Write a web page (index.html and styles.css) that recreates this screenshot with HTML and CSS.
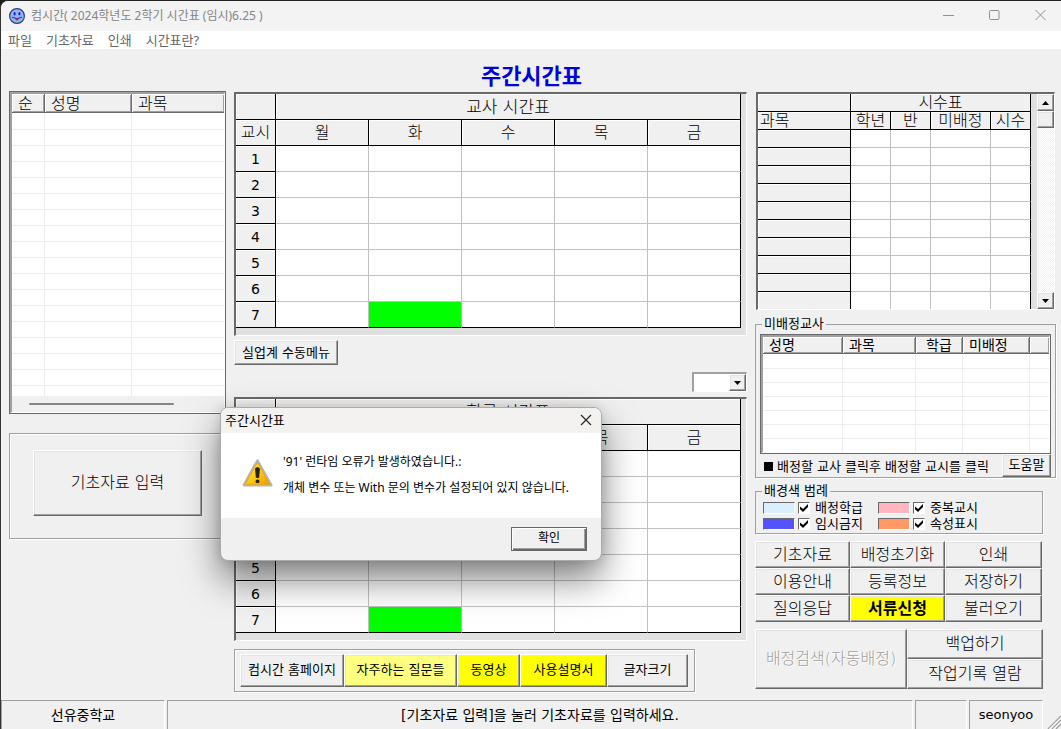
FILE: index.html
```html
<!DOCTYPE html>
<html lang="ko">
<head>
<meta charset="utf-8">
<title>컴시간</title>
<link rel="stylesheet" href="styles.css">
</head>
<body>
<div class="window">
  <header class="titlebar">
    <svg class="app-icon" viewBox="0 0 16 16" aria-hidden="true">
      <circle cx="8" cy="8" r="7.4" fill="#8fb4f8" stroke="#2b3f78" stroke-width="1.2"/>
      <ellipse cx="5.6" cy="5.8" rx="1.1" ry="1.8" fill="#2020c8"/>
      <ellipse cx="10.4" cy="5.8" rx="1.1" ry="1.8" fill="#2020c8"/>
      <path d="M3 9.2Q8 12 13 9.2" fill="none" stroke="#2b2b90"/>
      <path d="M5.6 10.6Q8 14.6 10.4 10.6Z" fill="#d02030"/>
    </svg>
    <span class="titlebar-text">컴시간( 2024학년도 2학기 시간표 (임시)6.25 )</span>
    <div class="window-controls">
      <button type="button" aria-label="최소화"><svg viewBox="0 0 12 12"><path d="M0 5.5H11"/></svg></button>
      <button type="button" aria-label="최대화"><svg viewBox="0 0 12 12"><rect x=".5" y=".5" width="9.5" height="9" rx="1"/></svg></button>
      <button type="button" aria-label="닫기"><svg viewBox="0 0 12 12"><path d="M.5 0L10.5 10M10.5 0L.5 10"/></svg></button>
    </div>
  </header>
  <nav class="menubar">
    <button type="button">파일</button>
    <button type="button">기초자료</button>
    <button type="button">인쇄</button>
    <button type="button">시간표란?</button>
  </nav>

  <main class="workspace">
    <section class="col-left">
      <div class="listview">
        <div class="listview-inner">
          <table class="list teachers">
            <colgroup><col class="w-no"><col class="w-name"><col></colgroup>
            <thead><tr><th>순</th><th>성명</th><th>과목</th></tr></thead>
            <tbody>
              <tr><td></td><td></td><td></td></tr><tr><td></td><td></td><td></td></tr>
              <tr><td></td><td></td><td></td></tr><tr><td></td><td></td><td></td></tr>
              <tr><td></td><td></td><td></td></tr><tr><td></td><td></td><td></td></tr>
              <tr><td></td><td></td><td></td></tr><tr><td></td><td></td><td></td></tr>
              <tr><td></td><td></td><td></td></tr><tr><td></td><td></td><td></td></tr>
              <tr><td></td><td></td><td></td></tr><tr><td></td><td></td><td></td></tr>
              <tr><td></td><td></td><td></td></tr><tr><td></td><td></td><td></td></tr>
              <tr><td></td><td></td><td></td></tr><tr><td></td><td></td><td></td></tr>
              <tr><td></td><td></td><td></td></tr><tr class="cut"><td></td><td></td><td></td></tr>
            </tbody>
          </table>
          <div class="hscroll"><div class="hscroll-thumb"></div></div>
        </div>
      </div>
      <div class="panel input-panel">
        <button type="button" class="btn big">기초자료 입력</button>
      </div>
    </section>

    <section class="col-mid">
      <h1>주간시간표</h1>
      <div class="sheet">
        <table class="grid week">
          <colgroup><col class="w-period"><col><col><col><col><col></colgroup>
          <thead>
            <tr><th></th><th colspan="5" class="caption">교사 시간표</th></tr>
            <tr><th>교시</th><th>월</th><th>화</th><th>수</th><th>목</th><th>금</th></tr>
          </thead>
          <tbody>
            <tr><th>1</th><td></td><td></td><td></td><td></td><td></td></tr>
            <tr><th>2</th><td></td><td></td><td></td><td></td><td></td></tr>
            <tr><th>3</th><td></td><td></td><td></td><td></td><td></td></tr>
            <tr><th>4</th><td></td><td></td><td></td><td></td><td></td></tr>
            <tr><th>5</th><td></td><td></td><td></td><td></td><td></td></tr>
            <tr><th>6</th><td></td><td></td><td></td><td></td><td></td></tr>
            <tr><th>7</th><td></td><td class="marked"></td><td></td><td></td><td></td></tr>
          </tbody>
        </table>
      </div>
      <button type="button" class="btn manual">실업계 수동메뉴</button>
      <div class="combo">
        <select aria-label="학급 선택"><option></option></select>
        <span class="btn arrow" aria-hidden="true"><svg viewBox="0 0 7 4"><path d="M0 0H7L3.5 4Z"/></svg></span>
      </div>
      <div class="sheet">
        <table class="grid week">
          <colgroup><col class="w-period"><col><col><col><col><col></colgroup>
          <thead>
            <tr><th></th><th colspan="5" class="caption">학급 시간표</th></tr>
            <tr><th>교시</th><th>월</th><th>화</th><th>수</th><th>목</th><th>금</th></tr>
          </thead>
          <tbody>
            <tr><th>1</th><td></td><td></td><td></td><td></td><td></td></tr>
            <tr><th>2</th><td></td><td></td><td></td><td></td><td></td></tr>
            <tr><th>3</th><td></td><td></td><td></td><td></td><td></td></tr>
            <tr><th>4</th><td></td><td></td><td></td><td></td><td></td></tr>
            <tr><th>5</th><td></td><td></td><td></td><td></td><td></td></tr>
            <tr><th>6</th><td></td><td></td><td></td><td></td><td></td></tr>
            <tr><th>7</th><td></td><td class="marked"></td><td></td><td></td><td></td></tr>
          </tbody>
        </table>
      </div>
      <div class="panel toolbar">
        <button type="button" class="btn t-home">컴시간 홈페이지</button>
        <button type="button" class="btn pale t-faq">자주하는 질문들</button>
        <button type="button" class="btn yellow t-video">동영상</button>
        <button type="button" class="btn yellow t-manual">사용설명서</button>
        <button type="button" class="btn t-font">글자크기</button>
      </div>
    </section>

    <section class="col-right">
      <div class="sheet hours">
        <table class="grid subjects">
          <colgroup><col><col class="w-s"><col class="w-s"><col class="w-m"><col class="w-s"></colgroup>
          <thead>
            <tr><th></th><th colspan="4">시수표</th></tr>
            <tr><th class="start">과목</th><th>학년</th><th>반</th><th>미배정</th><th>시수</th></tr>
          </thead>
          <tbody>
            <tr><th></th><td></td><td></td><td></td><td></td></tr>
            <tr><th></th><td></td><td></td><td></td><td></td></tr>
            <tr><th></th><td></td><td></td><td></td><td></td></tr>
            <tr><th></th><td></td><td></td><td></td><td></td></tr>
            <tr><th></th><td></td><td></td><td></td><td></td></tr>
            <tr><th></th><td></td><td></td><td></td><td></td></tr>
            <tr><th></th><td></td><td></td><td></td><td></td></tr>
            <tr><th></th><td></td><td></td><td></td><td></td></tr>
            <tr><th></th><td></td><td></td><td></td><td></td></tr>
            <tr class="cut"><th></th><td></td><td></td><td></td><td></td></tr>
          </tbody>
        </table>
        <div class="vscroll">
          <button type="button" class="btn arrow" aria-label="위로"><svg viewBox="0 0 7 4"><path d="M0 4H7L3.5 0Z"/></svg></button>
          <div class="btn vthumb"></div>
          <button type="button" class="btn arrow last" aria-label="아래로"><svg viewBox="0 0 7 4"><path d="M0 0H7L3.5 4Z"/></svg></button>
        </div>
      </div>

      <fieldset class="group unassigned">
        <legend>미배정교사</legend>
        <div class="listview">
          <div class="listview-inner">
            <table class="list small">
              <colgroup><col class="w-a"><col class="w-b"><col class="w-c"><col class="w-d"><col></colgroup>
              <thead><tr><th>성명</th><th>과목</th><th class="mid">학급</th><th>미배정</th><th></th></tr></thead>
              <tbody>
                <tr><td></td><td></td><td></td><td></td><td></td></tr>
                <tr><td></td><td></td><td></td><td></td><td></td></tr>
                <tr><td></td><td></td><td></td><td></td><td></td></tr>
                <tr><td></td><td></td><td></td><td></td><td></td></tr>
                <tr><td></td><td></td><td></td><td></td><td></td></tr>
                <tr><td></td><td></td><td></td><td></td><td></td></tr>
                <tr class="cut"><td></td><td></td><td></td><td></td><td></td></tr>
              </tbody>
            </table>
          </div>
        </div>
        <div class="hint">
          <p><i class="square"></i>배정할 교사 클릭후 배정할 교시를 클릭</p>
          <button type="button" class="btn help">도움말</button>
        </div>
      </fieldset>

      <fieldset class="group legend-group">
        <legend>배경색 범례</legend>
        <div class="keys">
          <label><i class="swatch sky"></i><input type="checkbox" checked>배정학급</label>
          <label><i class="swatch pink"></i><input type="checkbox" checked>중복교시</label>
          <label><i class="swatch blue"></i><input type="checkbox" checked>임시금지</label>
          <label><i class="swatch orange"></i><input type="checkbox" checked>속성표시</label>
        </div>
      </fieldset>

      <div class="actions">
        <button type="button" class="btn">기초자료</button>
        <button type="button" class="btn">배정초기화</button>
        <button type="button" class="btn">인쇄</button>
        <button type="button" class="btn">이용안내</button>
        <button type="button" class="btn">등록정보</button>
        <button type="button" class="btn">저장하기</button>
        <button type="button" class="btn">질의응답</button>
        <button type="button" class="btn yellow strong">서류신청</button>
        <button type="button" class="btn">불러오기</button>
      </div>
      <div class="jobs">
        <button type="button" class="btn search" disabled>배정검색(자동배정)</button>
        <button type="button" class="btn">백업하기</button>
        <button type="button" class="btn">작업기록 열람</button>
      </div>
    </section>
  </main>

  <footer class="statusbar">
    <div class="s-school">선유중학교</div>
    <div class="s-message">[기초자료 입력]을 눌러 기초자료를 입력하세요.</div>
    <div class="s-blank"></div>
    <div class="s-user">seonyoo</div>
    <svg class="grip" viewBox="0 0 14 14" aria-hidden="true"><path d="M1 14L14 1M5 14L14 5M9 14L14 9" stroke="#a0a0a0" stroke-width="1.4"/><path d="M2.5 14L14 2.5M6.5 14L14 6.5" stroke="#fff"/></svg>
  </footer>

  <div class="dialog" role="alertdialog" aria-labelledby="dlg-title" aria-describedby="dlg-text">
    <div class="dialog-title">
      <span id="dlg-title">주간시간표</span>
      <button type="button" class="dialog-close" aria-label="닫기"><svg viewBox="0 0 12 12"><path d="M1 1L11 11M11 1L1 11"/></svg></button>
    </div>
    <div class="dialog-body">
      <svg class="warning" viewBox="0 0 32 30" aria-hidden="true">
        <defs><linearGradient id="amber" x1="0" y1="0" x2="1" y2="1"><stop offset="0" stop-color="#fff13a"/><stop offset=".5" stop-color="#fccb12"/><stop offset="1" stop-color="#ee9a00"/></linearGradient></defs>
        <path d="M16 2.5L30 27.5H2Z" fill="#b4b4b4" stroke="#b4b4b4" stroke-width="3" stroke-linejoin="round"/>
        <path d="M16 4L28.6 26.6H3.4Z" fill="url(#amber)" stroke="#e8a800" stroke-linejoin="round"/>
        <path d="M14 10.4Q16 8.4 18 10.4L17.2 19.6H14.8Z" fill="#222" stroke="#222" stroke-linejoin="round"/>
        <circle cx="16" cy="23.6" r="2" fill="#222"/>
      </svg>
      <div id="dlg-text">
        <p>'91' 런타임 오류가 발생하였습니다.:</p>
        <p>개체 변수 또는 With 문의 변수가 설정되어 있지 않습니다.</p>
      </div>
    </div>
    <div class="dialog-footer">
      <button type="button" class="btn ok">확인</button>
    </div>
  </div>
</div>
</body>
</html>
```

FILE: styles.css
```css
* { box-sizing: border-box; }

:root {
  --face: #f0f0f0;
  --shade: #a0a0a0;
  --dark: #696969;
  --light: #e3e3e3;
  --ui: "Noto Sans", "Noto Sans CJK KR", sans-serif;
  --form: "DejaVu Sans", "Noto Sans CJK KR", sans-serif;
}

body {
  margin: 0;
  background: #1c1c1c;
  color: #000;
  font: 13px/16px var(--form);
}

button, select, input { font: inherit; color: inherit; margin: 0; padding: 0; }
button { border: 0; background: none; white-space: nowrap; }
p, h1 { margin: 0; }
svg { display: block; }

.window {
  position: relative;
  display: flex;
  flex-direction: column;
  min-height: 100vh;
  border-top: 1px solid #222;
  border-left: 1px solid #333;
  border-radius: 8px 0 0 0;
  background: var(--face);
  overflow: hidden;
}

/* title bar and menus */
.titlebar {
  display: flex;
  align-items: center;
  gap: 6px;
  height: 30px;
  padding-left: 8px;
  background: #f3f3f3;
  font: 12px/16px var(--ui);
  color: #858585;
}
.app-icon { width: 16px; height: 16px; }
.window-controls { display: flex; margin-left: auto; }
.window-controls button {
  display: flex;
  justify-content: center;
  align-items: center;
  width: 46px;
  height: 30px;
  padding-left: 6px;
}
.window-controls svg { width: 12px; height: 12px; fill: none; stroke: #909090; }
.menubar {
  display: flex;
  gap: 14px;
  height: 18px;
  padding-left: 7px;
  background: #fff;
  font: 13px/18px var(--ui);
  color: #666;
}

/* shared raised controls */
.btn {
  border: 1px solid;
  border-color: #fff var(--dark) var(--dark) #fff;
  background: var(--face);
  box-shadow: inset -1px -1px var(--shade), inset 1px 1px var(--light);
}
.btn:disabled { color: var(--shade); text-shadow: 1px 1px #fff; }
.btn.pale { background: #ffff80; }
.btn.yellow { background: #ff0; }
.btn.arrow { display: flex; justify-content: center; align-items: center; width: 17px; height: 17px; flex: none; }
.arrow svg { width: 7px; height: 4px; }
.panel {
  border: 1px solid var(--shade);
  box-shadow: inset 1px 1px #fff, 1px 1px #fff;
}

.workspace {
  flex: 1;
  display: grid;
  grid-template-columns: 217fr 513fr 301fr;
  gap: 8px;
  padding: 0 5px 8px 8px;
}
.col-left, .col-mid, .col-right { display: flex; flex-direction: column; min-width: 0; }
.col-left { padding-top: 42px; gap: 19px; }
.col-right { padding-top: 43px; }

/* list views */
.listview { border: 1px solid var(--dark); }
.listview-inner {
  border: 1px solid;
  border-color: var(--shade) #fff #fff var(--shade);
  border-width: 2px 1px 1px 2px;
  background: #fff;
}
table { border-collapse: separate; border-spacing: 0; table-layout: fixed; width: 100%; }
th, td { padding: 0; font-weight: 300; }
.list th {
  height: 19px;
  padding: 1px 0 0 6px;
  border-right: 1px solid var(--dark);
  border-bottom: 1px solid var(--dark);
  background: var(--face);
  box-shadow: inset 1px 1px #fff, inset -1px -1px var(--shade);
  text-align: left;
  font-size: 16px;
  line-height: 16px;
}
.list td { height: 16px; border-right: 1px solid #ededed; border-bottom: 1px solid #ededed; }
.list th:last-child, .list td:last-child { border-right: 0; }
.teachers tbody tr:first-child td { height: 17px; }
.teachers .cut td { height: 10px; border-bottom: 0; }
.w-no { width: 33px; }
.w-name { width: 87px; }
.list.small th { height: 17px; font-size: 14px; line-height: 14px; font-weight: 400; padding-top: 0; }
.list.small th.mid { padding-left: 10px; }
.list.small td { height: 14px; }
.list.small tbody tr:first-child td { height: 15px; }
.list.small .cut td { height: 13px; border-bottom: 0; }
.w-a { width: 80px; }
.w-b { width: 73px; }
.w-c { width: 47px; }
.w-d { width: 67px; }
.hscroll { height: 16px; padding: 7px 50px 0 17px; background: var(--face); }
.hscroll-thumb { height: 2px; border-radius: 1px; background: #868686; }

.input-panel { height: 106px; padding: 16px 23px; }
.big { width: 100%; max-width: 169px; height: 66px; font-size: 16px; font-weight: 300; }

/* timetable sheets */
h1 {
  height: 43px;
  padding: 12px 0 0 82px;
  text-align: center;
  font: 700 22px/28px var(--ui);
  color: #0000d8;
}
.sheet {
  border: 2px solid;
  border-color: var(--dark) #fff #fff var(--dark);
  border-width: 2px 1px 1px 2px;
  padding: 0 5px 7px 0;
  background: #e0e0e0;
}
.grid th {
  border-right: 1px solid #000;
  border-bottom: 1px solid #000;
  background: var(--face);
  box-shadow: inset 1px 1px #fff;
  font-size: 16px;
  line-height: 16px;
}
.grid .caption { font-size: 17px; }
.grid td { border-right: 1px solid #c0c0c0; border-bottom: 1px solid #c0c0c0; background: #fff; }
.grid td:last-child { border-right-color: #000; }
.week th, .week td { height: 26px; }
.week tbody th { font-size: 14px; font-weight: 400; }
.week tr:last-child td { border-bottom-color: #000; }
.grid .marked { background: #0f0; }
.w-period { width: 40px; }

.manual { align-self: flex-start; width: 104px; height: 25px; margin: 4px 0 7px; }
.combo {
  display: flex;
  align-self: flex-end;
  width: 55px;
  height: 20px;
  margin-bottom: 5px;
  border: 2px solid;
  border-color: var(--shade) #fff #fff var(--shade);
  border-width: 2px 1px 1px 2px;
  background: #fff;
}
.combo select { flex: 1; min-width: 0; appearance: none; border: 0; background: #fff; }
.toolbar {
  display: flex;
  align-self: flex-start;
  margin-top: 8px;
  padding: 4px 6px 4px 5px;
  height: 43px;
}
.toolbar .btn { height: 33px; padding-bottom: 2px; }
.t-home { width: 104px; }
.t-faq { width: 113px; }
.t-video { width: 63px; }
.t-manual { width: 87px; }
.t-font { width: 81px; }

/* right column */
.hours { display: flex; margin: 0 1px; padding: 0; }
.subjects { flex: 1; margin-right: 6px; min-width: 0; }
.subjects th, .subjects td { height: 18px; }
.subjects .start { text-align: left; padding-left: 2px; }
.subjects .cut th, .subjects .cut td { height: 17px; border-bottom: 0; }
.w-s { width: 40px; }
.w-m { width: 60px; }
.vscroll {
  display: flex;
  flex-direction: column;
  width: 17px;
  background: repeating-conic-gradient(#fff 0 25%, #f0f0f0 0 50%) 0 0 / 2px 2px;
}
.vthumb { height: 17px; }
.vscroll .last { margin-top: auto; }

.group {
  min-width: 0;
  margin: 0;
  padding: 0 4px;
  border: 1px solid var(--shade);
  box-shadow: 1px 1px #fff;
}
.group legend { height: 16px; padding: 0 2px; margin-left: 2px; }
.unassigned { margin-top: 6px; padding-top: 2px; }
.hint { display: flex; justify-content: space-between; }
.hint p { display: flex; align-items: center; gap: 4px; padding: 2px 0 0 4px; }
.square { width: 9px; height: 9px; background: #000; }
.help { width: 49px; height: 23px; padding-bottom: 2px; }

.legend-group { margin: 5px 13px 0 0; padding: 1px 4px; }
.keys { display: grid; grid-template-columns: 115px 1fr; padding-left: 3px; }
.keys label { display: flex; align-items: center; height: 16px; }
.swatch {
  width: 32px;
  height: 12px;
  margin-right: 3px;
  border: 1px solid;
  border-color: var(--dark) #fff #fff var(--dark);
}
.sky { background: #d9efff; }
.blue { background: #5252ff; }
.pink { background: #ffb6be; }
.orange { background: #ff9966; }
.keys input {
  appearance: none;
  width: 12px;
  height: 12px;
  margin-right: 5px;
  border: 1px solid;
  border-color: var(--dark) #fff #fff var(--dark);
  background: #fff;
}
.keys input:checked::before {
  content: "";
  display: block;
  width: 8px;
  height: 8px;
  margin: 1px;
  background: #000;
  clip-path: polygon(0 30%, 38% 62%, 100% 0, 100% 36%, 38% 100%, 0 66%);
}

.actions, .jobs { display: grid; font-size: 16px; font-weight: 300; line-height: 18px; }
.actions {
  grid-template-columns: 95fr 95fr 97fr;
  grid-auto-rows: 27px;
  margin: 7px 14px 0 0;
}
.strong { font-weight: 700; }
.jobs {
  grid-template: 30px 30px / 152fr 136fr;
  margin: 7px 13px 0 0;
}
.search { grid-row: span 2; }

/* status bar */
.statusbar {
  display: flex;
  gap: 2px;
  height: 29px;
  font-size: 14px;
  line-height: 28px;
  text-align: center;
}
.statusbar div {
  border: 1px solid;
  border-color: var(--shade) #fff transparent var(--shade);
  border-bottom: 0;
}
.s-school { width: 164px; }
.s-message { flex: 1; }
.s-blank { width: 52px; }
.s-user { width: 74px; font-size: 13px; }
.grip { width: 14px; height: 14px; align-self: flex-end; margin-left: 2px; }

/* message box over the form */
.dialog {
  position: absolute;
  left: 219px;
  top: 406px;
  width: 382px;
  border: 1px solid #aaa;
  border-radius: 8px;
  background: var(--face);
  box-shadow: 0 18px 36px rgba(0, 0, 0, .5), 0 0 12px rgba(0, 0, 0, .12);
  font: 12px/16px var(--ui);
  overflow: hidden;
}
.dialog-title {
  display: flex;
  justify-content: space-between;
  align-items: center;
  height: 25px;
  padding: 0 9px 2px 4px;
  background: #f3f2f0;
  font-size: 13px;
}
.dialog-close svg { width: 12px; height: 12px; fill: none; stroke: #222; stroke-width: 1.1; }
.dialog-body { display: flex; gap: 10px; height: 85px; padding: 21px; background: #fff; }
.warning { width: 31px; height: 30px; margin-top: 4px; }
#dlg-text { display: grid; gap: 10px; align-content: start; white-space: nowrap; }
.dialog-footer { display: flex; justify-content: flex-end; height: 42px; padding: 9px 14px; }
.ok {
  width: 76px;
  height: 24px;
  line-height: 14px;
  padding-bottom: 2px;
  border-color: var(--dark);
  box-shadow: inset 1px 1px #fff, inset -1px -1px var(--dark), inset -2px -2px var(--shade);
}
```
